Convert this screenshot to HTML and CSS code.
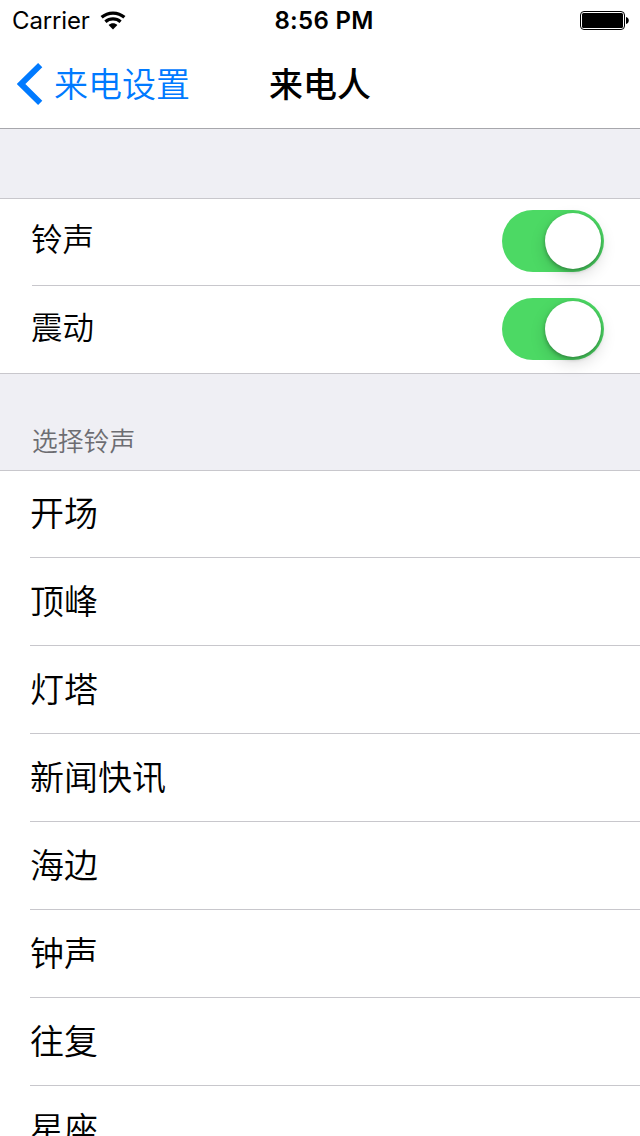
FILE: index.html
```html
<!DOCTYPE html>
<html lang="zh-CN">
<head>
<meta charset="utf-8">
<title>来电人</title>
<link rel="stylesheet" href="styles.css">
</head>
<body>
<div class="screen">
  <header class="top">
    <div class="status">
      <div class="carrier"><span>Carrier</span>
        <svg class="wifi" width="26" height="19" viewBox="0 0 26 19"><g fill="none" stroke="#000" stroke-width="3.2"><path d="M1.6 6.3C8 .6 18 .6 24.4 6.3"/><path d="M5.4 10.7C9.8 6.9 16.2 6.9 20.6 10.7"/></g><path d="M8.6 14C11.2 11.6 14.8 11.6 17.4 14L13 18.4Z"/></svg>
      </div>
      <div class="time">8:56 PM</div>
      <svg class="battery" width="49" height="19" viewBox="0 0 49 19"><rect x=".5" y=".5" width="44" height="18" rx="3.5" fill="none" stroke="#000"/><rect x="2" y="2" width="41" height="15" rx="1.5"/><path d="M46 6C49.7 6.5 49.7 12.5 46 13Z"/></svg>
    </div>
    <nav class="nav">
      <a class="back"><svg width="26" height="42" viewBox="0 0 26 42"><path d="M23.2 2.2 4 21 23.2 39.8" fill="none" stroke="#007aff" stroke-width="6"/></svg><span class="back-label">来电设置</span></a>
      <h1 class="title">来电人</h1>
    </nav>
  </header>
  <section class="group toggles">
    <div class="row"><span class="label">铃声</span><span class="switch"><span class="knob"></span></span></div>
    <div class="row"><span class="label">震动</span><span class="switch"><span class="knob"></span></span></div>
  </section>
  <h2 class="caption">选择铃声</h2>
  <section class="group list">
    <div class="row">开场</div>
    <div class="row">顶峰</div>
    <div class="row">灯塔</div>
    <div class="row">新闻快讯</div>
    <div class="row">海边</div>
    <div class="row">钟声</div>
    <div class="row">往复</div>
    <div class="row">星座</div>
  </section>
</div>
</body>
</html>
```
FILE: styles.css
```css
* { box-sizing: border-box; }
body { margin: 0; overflow: hidden; }
.screen { width: 640px; height: 1136px; overflow: hidden; background: #efeff4; color: #000; font-family: "Noto Sans CJK SC", sans-serif; font-size: 34px; font-weight: 350; }
.top { height: 129px; background: #fff; border-bottom: 1px solid #a7a7ac; }
.status { height: 40px; display: grid; grid-template-columns: 1fr auto 1fr; align-items: center; padding: 0 11px 0 12px; font: 24px/38px Inter, sans-serif; }
.carrier { display: flex; align-items: center; gap: 10px; letter-spacing: -.15px; padding-top: 2px; }
.wifi { margin-top: -1px; }
.time { font-weight: 600; letter-spacing: .3px; padding: 2px 0 0 7px; }
.battery { justify-self: end; }
.nav { height: 88px; display: grid; grid-template-columns: 1fr auto 1fr; align-items: center; padding: 0 16px; line-height: 50px; }
.back { display: flex; align-items: center; gap: 11px; padding-left: 1px; color: #007aff; white-space: nowrap; }
.back-label { padding-bottom: 3px; }
.title { margin: 0; padding-bottom: 2px; font-size: 34px; font-weight: 500; }
.group { background: #fff; border-top: 1px solid #c8c7cc; }
.toggles { margin-top: 69px; border-bottom: 1px solid #c8c7cc; padding-left: 32px; font-size: 31.5px; }
.row { height: 88px; display: flex; align-items: center; padding-bottom: 3px; border-bottom: 1px solid #c8c7cc; line-height: 48px; }
.toggles .row { height: 87px; justify-content: space-between; padding: 0 36px 2px 0; }
.toggles .row + .row { border: 0; height: 87px; padding-bottom: 1px; }
.label { margin-left: -1px; padding-bottom: 9px; }
.switch { width: 102px; height: 62px; border-radius: 31px; padding: 3px; background: #4cd964; display: flex; justify-content: flex-end; }
.knob { width: 56px; height: 56px; border-radius: 50%; background: #fff; box-shadow: 0 6px 16px rgba(0,0,0,.15), 0 2px 4px rgba(0,0,0,.3); }
.caption { height: 96px; margin: 0; padding: 46px 0 0 32px; font-size: 25.8px; line-height: 40px; font-weight: 350; color: #6d6d72; }
.list { padding-left: 30px; }
.list .row:first-child { height: 87px; padding-bottom: 4px; }
```
